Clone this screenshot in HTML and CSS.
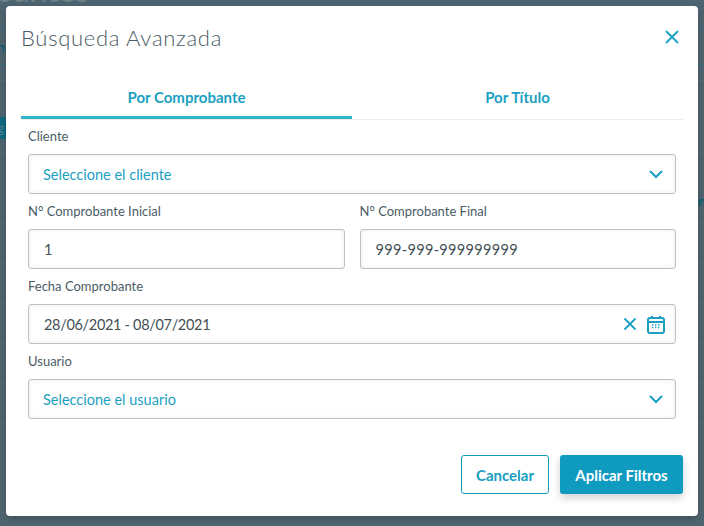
FILE: index.html
```html
<!DOCTYPE html>
<html lang="es">
<head>
  <meta charset="UTF-8">
  <title>Búsqueda Avanzada</title>
  <link rel="stylesheet" href="styles.css">
</head>
<body>
  <!-- pagina de fondo, tapada por el modal -->
  <div class="backdrop">
    <div class="bg-title">Comprobantes</div>
    <div class="bg-line bg-line-1"></div>
    <div class="bg-line bg-line-2"></div>
    <div class="bg-row bg-row-1"></div>
    <div class="bg-row bg-row-2"></div>
    <div class="bg-rows"></div>
    <div class="bg-link bg-link-left">n</div>
    <div class="bg-link bg-link-right">n</div>
    <div class="bg-chip">g</div>
  </div>

  <div class="modal">
    <div class="modal-header">
      <h1>Búsqueda Avanzada</h1>
      <svg class="icon-close" width="14" height="14" viewBox="0 0 14 14"><path d="M1 1l12 12M13 1L1 13"/></svg>
    </div>

    <div class="tabs">
      <div class="tab active">Por Comprobante</div>
      <div class="tab">Por Título</div>
    </div>

    <div class="form">
      <div class="field">
        <label>Cliente</label>
        <div class="input select">
          <span>Seleccione el cliente</span>
          <svg class="icon-chevron" width="16" height="10" viewBox="0 0 16 10"><path d="M2 2l6 6 6-6"/></svg>
        </div>
      </div>

      <div class="row">
        <div class="field">
          <label>N° Comprobante Inicial</label>
          <div class="input"><span>1</span></div>
        </div>
        <div class="field">
          <label>N° Comprobante Final</label>
          <div class="input"><span class="digits">999-999-999999999</span></div>
        </div>
      </div>

      <div class="field">
        <label>Fecha Comprobante</label>
        <div class="input">
          <span class="date">28/06/2021 - 08/07/2021</span>
          <div class="input-icons">
            <svg class="icon-close" width="14" height="14" viewBox="0 0 14 14"><path d="M1.5 1.5l11 11M12.5 1.5l-11 11"/></svg>
            <svg class="icon-calendar" width="18" height="19" viewBox="0 0 18 19">
              <rect x="1" y="3" width="16" height="15" rx="2"/>
              <path d="M1 7h16M5 1v3M13 1v3"/>
              <path class="dots" d="M5 10h2M8 10h2M11 10h2M5 12.5h2M8 12.5h2M11 12.5h2"/>
            </svg>
          </div>
        </div>
      </div>

      <div class="field">
        <label>Usuario</label>
        <div class="input select">
          <span>Seleccione el usuario</span>
          <svg class="icon-chevron" width="16" height="10" viewBox="0 0 16 10"><path d="M2 2l6 6 6-6"/></svg>
        </div>
      </div>
    </div>

    <div class="modal-footer">
      <button class="btn btn-outline">Cancelar</button>
      <button class="btn btn-primary">Aplicar Filtros</button>
    </div>
  </div>
</body>
</html>
```

FILE: styles.css
```css
:root {
  --teal: #0f9bbf;
  --teal-text: #1b9fc2;
  --text: #4a5c66;
  --border: #bcc1c3;
}

* {
  margin: 0;
  padding: 0;
  box-sizing: border-box;
}

html, body {
  height: 100%;
}

body {
  font-family: Lato, "Open Sans", sans-serif;
  background-color: #4e6571;
  overflow: hidden;
  padding: 6px;
}

.backdrop {
  position: absolute;
  inset: 0;
  overflow: hidden;
}

.bg-title {
  position: absolute;
  left: -117px;
  top: -30px;
  font-size: 32px;
  color: #6a808b;
}

.bg-line,
.bg-row {
  position: absolute;
  left: 0;
  right: 0;
  height: 1px;
}

.bg-line {
  background-color: #3f6f82;
}

.bg-row {
  background-color: #566c77;
}

.bg-line-1 { top: 26px; }
.bg-line-2 { top: 64px; }
.bg-row-1 { top: 80px; }
.bg-row-2 { top: 153px; }

.bg-rows {
  position: absolute;
  left: 0;
  right: 0;
  top: 222px;
  height: 240px;
  background: repeating-linear-gradient(#566c77 0, #566c77 1px, transparent 1px, transparent 40px);
}

.bg-link {
  position: absolute;
  font-size: 14px;
  font-weight: 700;
  color: #0e5f78;
}

.bg-link-left {
  left: -3px;
  top: 38px;
}

.bg-link-right {
  right: -2px;
  top: 192px;
}

.bg-chip {
  position: absolute;
  left: 0;
  top: 117px;
  width: 6px;
  height: 22px;
  line-height: 22px;
  font-size: 13px;
  text-indent: -3px;
  overflow: hidden;
  color: #55808f;
  background-color: #0e6a82;
}

.modal {
  position: relative;
  width: 692px;
  height: 510px;
  background-color: white;
  border-radius: 4px;
  box-shadow: 0 3px 8px rgba(0, 0, 0, 0.2);
  padding: 0 15px;
  display: flex;
  flex-direction: column;
}

.modal-header {
  height: 62px;
  display: flex;
  align-items: center;
  justify-content: space-between;
}

.modal-header .icon-close {
  margin-right: 4px;
}

h1 {
  font-size: 22px;
  font-weight: 300;
  letter-spacing: 0.7px;
  color: var(--text);
}

.tabs {
  display: flex;
  margin-top: 5px;
  border-bottom: 1px solid #eceeef;
}

.tab {
  flex: 1;
  height: 46px;
  padding-top: 15px;
  text-align: center;
  font-size: 15px;
  font-weight: 700;
  color: var(--teal-text);
}

.tab.active {
  border-bottom: 3px solid #2fb7c9;
  margin-bottom: -1px;
}

.form {
  padding: 0 7px;
  margin-top: 8px;
  display: flex;
  flex-direction: column;
  gap: 9px;
}

.row {
  display: flex;
  gap: 15px;
}

.row .field {
  flex: 1;
}

label {
  display: block;
  font-size: 13px;
  color: var(--text);
  height: 16px;
  line-height: 16px;
  margin-bottom: 10px;
}

.input {
  height: 40px;
  border: 1px solid var(--border);
  border-radius: 3px;
  box-shadow: inset 0 0 5px rgba(0, 0, 0, 0.08);
  padding: 0 15px;
  display: flex;
  align-items: center;
  justify-content: space-between;
  font-size: 14.5px;
  color: #444f55;
}

.input.select {
  color: var(--teal-text);
  padding-left: 14px;
  padding-right: 11px;
}

.digits {
  letter-spacing: 0.33px;
}

.date {
  letter-spacing: -0.32px;
}

.input-icons {
  display: flex;
  align-items: center;
  gap: 10px;
  margin-right: -5px;
}

svg path, svg rect {
  fill: none;
  stroke: var(--teal-text);
  stroke-width: 2;
}

.icon-close path {
  stroke-width: 1.8;
}

.icon-calendar path.dots {
  stroke-width: 1.4;
  stroke-dasharray: 1.4 0.6;
}

.modal-footer {
  margin-top: auto;
  padding-bottom: 22px;
  display: flex;
  justify-content: flex-end;
  gap: 11px;
}

.btn {
  height: 39px;
  border-radius: 3px;
  font-family: inherit;
  font-size: 15px;
  font-weight: 700;
  cursor: pointer;
}

.btn-outline {
  width: 88px;
  background-color: white;
  border: 1px solid var(--teal);
  color: var(--teal-text);
}

.btn-primary {
  width: 123px;
  background-color: var(--teal);
  border: none;
  color: white;
  box-shadow: 0 4px 8px rgba(0, 0, 0, 0.18);
}
```
